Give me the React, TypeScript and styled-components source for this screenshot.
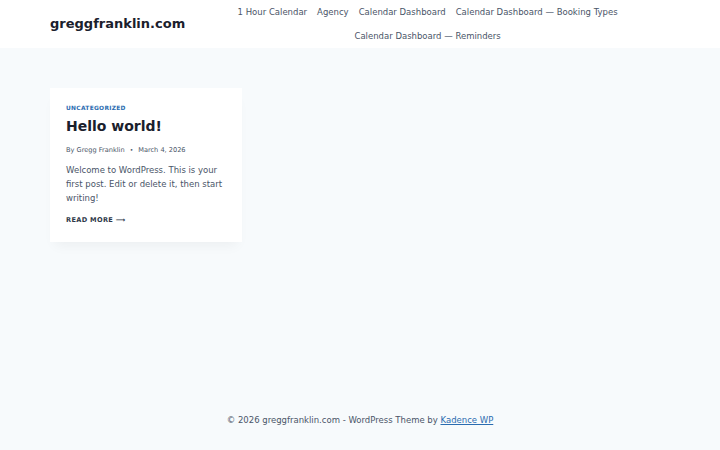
import React from "react";
import styled, { createGlobalStyle } from "styled-components";

const GlobalStyle = createGlobalStyle`
  html, body {
    margin: 0;
    padding: 0;
    background: #f7fafc;
  }
  body {
    font-family: "DejaVu Sans", "Noto Sans", sans-serif;
    color: #4a5568;
    font-size: 8.5px;
    line-height: 1.6;
  }
  #root {
    min-height: 450px;
    display: flex;
    flex-direction: column;
  }
`;

const Header = styled.header`
  background: #ffffff;
  height: 48px;
`;

const HeaderInner = styled.div`
  width: 620px;
  margin: 0 auto;
  height: 100%;
  display: flex;
  align-items: center;
`;

const SiteTitle = styled.a`
  font-size: 13px;
  font-weight: 700;
  color: #1a202c;
  text-decoration: none;
  white-space: nowrap;
`;

const Nav = styled.nav`
  flex: 1;
  display: flex;
  flex-wrap: wrap;
  justify-content: center;
  align-self: flex-start;
`;

const NavLink = styled.a`
  display: block;
  padding: 0 5px;
  line-height: 24px;
  font-size: 8.5px;
  color: #4a5568;
  text-decoration: none;
  white-space: nowrap;
`;

const Main = styled.main`
  flex: 1;
  width: 620px;
  margin: 0 auto;
  padding-top: 40px;
`;

const Grid = styled.div`
  display: grid;
  grid-template-columns: repeat(3, 1fr);
  gap: 22px;
`;

const Card = styled.article`
  background: #ffffff;
  box-shadow: 0 8px 12px -5px rgba(0, 0, 0, 0.05);
  padding: 15px 16px 15px;
`;

const Category = styled.a`
  display: block;
  font-size: 5.9px;
  font-weight: 700;
  letter-spacing: 0.05em;
  text-transform: uppercase;
  color: #2b6cb0;
  text-decoration: none;
  line-height: 10px;
`;

const Title = styled.h2`
  margin: 2px 0 0;
  font-size: 14px;
  font-weight: 700;
  line-height: 22px;
  color: #1a202c;
`;

const Meta = styled.div`
  margin-top: 7px;
  display: flex;
  align-items: center;
  font-size: 6.6px;
  line-height: 12px;
  color: #4a5568;
`;

const Dot = styled.span`
  margin: 0 5px;
  font-size: 6px;
`;

const Excerpt = styled.p`
  margin: 8px 0 0;
  font-size: 8.5px;
  line-height: 13.8px;
`;

const ReadMore = styled.a`
  display: inline-block;
  margin-top: 9px;
  font-size: 6.6px;
  font-weight: 700;
  letter-spacing: 0.05em;
  text-transform: uppercase;
  color: #2d3748;
  text-decoration: none;
  line-height: 12px;
`;

const Footer = styled.footer`
  padding: 0 0 23px;
  text-align: center;
  font-size: 8.5px;
  color: #4a5568;
  line-height: 14px;
`;

const FooterLink = styled.a`
  color: #2b6cb0;
  text-decoration: underline;
`;

const navItems = [
  "1 Hour Calendar",
  "Agency",
  "Calendar Dashboard",
  "Calendar Dashboard — Booking Types",
  "Calendar Dashboard — Reminders",
];

export default function App() {
  return (
    <>
      <GlobalStyle />
      <Header>
        <HeaderInner>
          <SiteTitle href="#">greggfranklin.com</SiteTitle>
          <Nav>
            {navItems.map((item) => (
              <NavLink key={item} href="#">
                {item}
              </NavLink>
            ))}
          </Nav>
        </HeaderInner>
      </Header>
      <Main>
        <Grid>
          <Card>
            <Category href="#">Uncategorized</Category>
            <Title>Hello world!</Title>
            <Meta>
              <span>By Gregg Franklin</span>
              <Dot>•</Dot>
              <span>March 4, 2026</span>
            </Meta>
            <Excerpt>
              Welcome to WordPress. This is your first post. Edit or delete it,
              then start writing!
            </Excerpt>
            <ReadMore href="#">Read More ⟶</ReadMore>
          </Card>
        </Grid>
      </Main>
      <Footer>
        © 2026 greggfranklin.com - WordPress Theme by{" "}
        <FooterLink href="#">Kadence WP</FooterLink>
      </Footer>
    </>
  );
}
